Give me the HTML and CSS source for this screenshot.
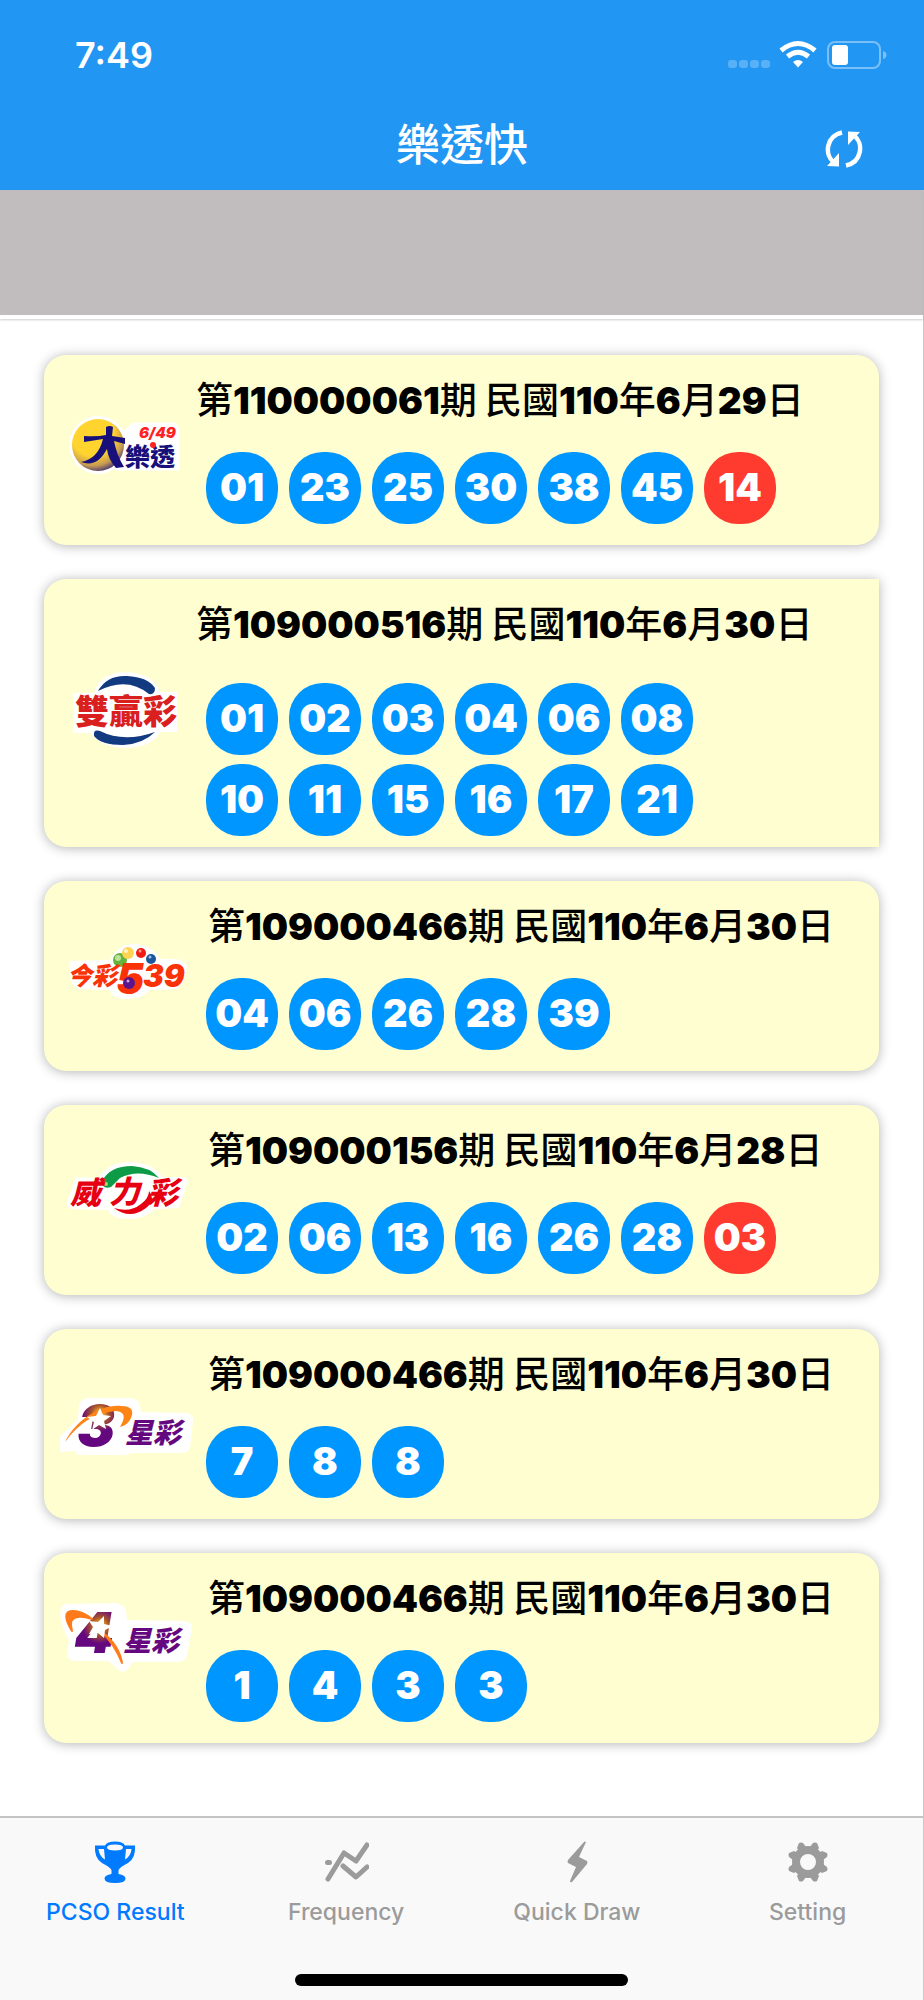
FILE: index.html
```html
<!DOCTYPE html>
<html lang="zh-Hant">
<head>
<meta charset="utf-8">
<meta name="viewport" content="width=device-width, initial-scale=1">
<title>樂透快</title>
<link rel="stylesheet" href="styles.css">
</head>
<body>
<div class="app">
  <header class="header">
    <div class="status">
      <span class="time">7:49</span>
      <svg class="status-icons" width="160" height="30" viewBox="0 0 160 30" aria-hidden="true">
        <g fill="#fff" fill-opacity=".25"><rect x="0" y="20" width="9" height="8" rx="3"/><rect x="11" y="20" width="9" height="8" rx="3"/><rect x="22" y="20" width="9" height="8" rx="3"/><rect x="33" y="20" width="9" height="8" rx="3"/></g>
        <g fill="none" stroke="#fff" stroke-width="5"><path d="M53 10.500Q70-3.500 87 10.500"/><path d="M59.500 16.500Q70 8 80.500 16.500"/></g>
        <path d="M65 22q5-4 10 0l-5 5.500z" fill="#fff"/>
        <rect x="100" y="2" width="52" height="26" rx="7" fill="none" stroke="#fff" stroke-opacity=".4" stroke-width="2"/>
        <rect x="104" y="5" width="16" height="20" rx="3" fill="#fff"/>
        <path d="M155 11q3.500 1 3.500 4t-3.500 4z" fill="#fff" fill-opacity=".4"/>
      </svg>
    </div>
    <div class="nav">
      <h1 class="title">樂透快</h1>
      <button class="refresh" type="button" aria-label="Refresh">
        <svg width="38" height="38" viewBox="0 0 38 38" aria-hidden="true"><path d="M17 2.500C1 6 -1 25 9 32.500M21 35.500C37 32 39 13 29 5.500" fill="none" stroke="#fff" stroke-width="4.500"/><path d="M14 23v13.500L2 36zM23 15V1.500l12 .5z" fill="#fff"/></svg>
      </button>
    </div>
  </header>
  <div class="banner"></div>

  <main class="results">
    <article class="card">
      <svg class="logo" viewBox="0 0 140 120" role="img" aria-label="大樂透">
        <defs><radialGradient id="sun" cx=".4" cy=".3" r=".75"><stop offset=".55" stop-color="#ffd42e"/><stop offset=".8" stop-color="#c69a52"/><stop offset="1" stop-color="#352577"/></radialGradient></defs>
        <circle cx="42" cy="55" r="29" fill="#fff"/><path d="M65 45l13-11h40q5 3 4 12v33H60z" fill="#fff" stroke="#fff" stroke-width="3" stroke-linejoin="round"/>
        <circle cx="42" cy="55" r="26" fill="url(#sun)"/>
        <path d="M28 46q13 1 22-1v-8q4-2 7 0l-1 9 13 2v6l-11-3q3 15 10 26l-8 1q-8-9-9-19-10 19-26 13 17-3 22-23l-19 3z" fill="#17107a"/>
        <text class="word navy" x="69" y="76" font-size="25">樂透</text>
        <text class="num red" x="83" y="48" font-size="15">6/49</text><circle cx="97" cy="55" r="3" fill="#f22"/>
      </svg>
      <div class="draw">
        <h2 class="issue">第<b>110000061</b>期 民國<b>110</b>年<b>6</b>月<b>29</b>日</h2>
        <ul class="balls"><li>01</li><li>23</li><li>25</li><li>30</li><li>38</li><li>45</li><li class="special">14</li></ul>
      </div>
    </article>

    <article class="card double">
      <svg class="logo" viewBox="0 0 140 120" role="img" aria-label="雙贏彩">
        <path d="M17 40h21q5-20 31-21 28 1 35 20h17v40h-17q-8 15-33 16-28-1-36-15H17z" fill="#fff"/>
        <path d="M42 38q9-16 29-15 21 1 28 12 0 7-6 6-22-18-51-3zM99 79q-12 12-32 13-22 0-29-9-1-7 6-5 24 12 55 1z" fill="#123a80"/>
        <text class="word crimson" x="19" y="71" font-size="34">雙贏彩</text>
      </svg>
      <div class="draw">
        <h2 class="issue">第<b>109000516</b>期 民國<b>110</b>年<b>6</b>月<b>30</b>日</h2>
        <ul class="balls"><li>01</li><li>02</li><li>03</li><li>04</li><li>06</li><li>08</li><li>10</li><li>11</li><li>15</li><li>16</li><li>17</li><li>21</li></ul>
      </div>
    </article>

    <article class="card inset">
      <svg class="logo" viewBox="0 0 140 120" role="img" aria-label="今彩539">
        <path d="M14 45l40-1q8-17 26-16 17 2 24 15 25-2 27 7-1 16-10 23l-27 1q-8 10-26 9-13-1-14-9l-32-1q-11-6-8-28z" fill="#fff"/>
        <circle cx="64" cy="44" r="7" fill="#64b43c"/><circle cx="62" cy="42" r="3" fill="#bfe29a"/>
        <circle cx="72" cy="37" r="6" fill="#ffd454"/><circle cx="70" cy="35" r="2" fill="#fff6c8"/>
        <circle cx="85" cy="37" r="5" fill="#f01c14"/><circle cx="84" cy="35" r="1.500" fill="#ff9c90"/>
        <circle cx="95" cy="43" r="5" fill="#1b559c"/><circle cx="94" cy="41" r="1.500" fill="#9cc0e4"/>
        <text class="word slant scarlet" x="11" y="69" font-size="25">今彩</text>
        <text class="num scarlet" x="60" y="78" font-size="42">5</text>
        <text class="num scarlet" x="87" y="71" font-size="31">39</text>
        <circle cx="73" cy="67" r="6" fill="#5b1489"/><circle cx="72" cy="65" r="1.500" fill="#c9a2e4"/>
      </svg>
      <div class="draw">
        <h2 class="issue">第<b>109000466</b>期 民國<b>110</b>年<b>6</b>月<b>30</b>日</h2>
        <ul class="balls"><li>04</li><li>06</li><li>26</li><li>28</li><li>39</li></ul>
      </div>
    </article>

    <article class="card inset">
      <svg class="logo" viewBox="0 0 140 120" role="img" aria-label="威力彩">
        <path d="M20 37l22 1q10-16 32-16 24 1 32 15h22q5 2 2 10l-7 21-24 1q-10 10-27 10-16 0-20-9l-33-1q-10 0-8-7z" fill="#fff"/>
        <path d="M46 41q8-15 30-15 18 1 27 12-22-9-39 0l-9 9q-9 3-9-6z" fill="#0d9b48"/><circle cx="50" cy="44" r="2" fill="#a8d86a"/>
        <path d="M58 68q16 5 27-4 8-6 8-13 7 9-3 17-16 12-32 0z" fill="#e60012"/>
        <text class="word slant ruby" x="14" y="64" font-size="31">威</text><text class="word slant ruby" x="53" y="63" font-size="31">力</text><text class="word slant ruby" x="91" y="64" font-size="31">彩</text>
      </svg>
      <div class="draw">
        <h2 class="issue">第<b>109000156</b>期 民國<b>110</b>年<b>6</b>月<b>28</b>日</h2>
        <ul class="balls"><li>02</li><li>06</li><li>13</li><li>16</li><li>26</li><li>28</li><li class="special">03</li></ul>
      </div>
    </article>

    <article class="card inset">
      <svg class="logo" viewBox="0 0 140 120" role="img" aria-label="3星彩">
        <defs><radialGradient id="glow3" gradientUnits="userSpaceOnUse" cx="44" cy="50" r="22"><stop offset=".1" stop-color="#ffb62e"/><stop offset=".4" stop-color="#a8542a"/><stop offset=".8" stop-color="#65087f"/></radialGradient></defs>
        <path d="M23 40q3-7 12-6h40q8 1 9 8l1 6 46 1q7 2 6 8l-3 27q-2 5-8 5H76q-8 3-15 2H28q-8 1-9-4L4 88V73l18-18z" fill="#fff"/>
        <text class="num" x="21" y="82" font-size="57" fill="url(#glow3)">3</text>
        <path d="M9 78C20 56 45 40 65 42q15 0 10 12-3 7-11 9 9-15-4-16Q30 49 9 78z" fill="#ff8416"/>
        <path d="M44 44l3 7 8 1-7 5 2 8-7-4-7 5 2-8-7-5 9-1z" fill="#fff"/>
        <text class="word slant purple" x="69" y="79" font-size="28">星彩</text>
      </svg>
      <div class="draw">
        <h2 class="issue">第<b>109000466</b>期 民國<b>110</b>年<b>6</b>月<b>30</b>日</h2>
        <ul class="balls"><li>7</li><li>8</li><li>8</li></ul>
      </div>
    </article>

    <article class="card inset">
      <svg class="logo" viewBox="0 0 140 120" role="img" aria-label="4星彩">
        <defs><radialGradient id="glow4" gradientUnits="userSpaceOnUse" cx="44" cy="38" r="22"><stop offset=".1" stop-color="#ffb62e"/><stop offset=".4" stop-color="#a8542a"/><stop offset=".8" stop-color="#65087f"/></radialGradient></defs>
        <path d="M5 20q2-5 9-4l45-1q10 1 11 8l1 9 57 1q9 1 8 8l-5 27q-3 6-9 6H77l-6 8q-5 4-9-1l-10-8H19q-8-1-8-7l2-14Q2 34 5 20z" fill="#fff"/>
        <text class="num" x="18" y="65" font-size="57" fill="url(#glow4)">4</text>
        <path d="M16 43Q4 23 17 23q9 0 19 8-15-5-20 1-2 3 0 11zM46 44q17 13 20 31-7-18-20-31z" fill="#ff7a1a" stroke="#ff7a1a" stroke-width="2" stroke-linejoin="round"/>
        <path d="M48 28v8l9 2-8 4-1 8-6-5-9 1 4-7-4-6 9 1z" fill="#fff"/>
        <text class="word slant purple" x="67" y="63" font-size="28">星彩</text>
      </svg>
      <div class="draw">
        <h2 class="issue">第<b>109000466</b>期 民國<b>110</b>年<b>6</b>月<b>30</b>日</h2>
        <ul class="balls"><li>1</li><li>4</li><li>3</li><li>3</li></ul>
      </div>
    </article>
  </main>

  <footer class="footer">
    <nav class="tabs">
      <a class="tab active" href="#result" aria-current="page">
        <svg width="44" height="44" viewBox="0 0 44 44" aria-hidden="true"><path fill="currentColor" fill-rule="evenodd" d="M12 5.500Q14 1.500 22 1.500T32 5.500H42Q43 18 35 23 27 27 25.500 30v4q7 1 7 4.500 0 4.500-10.500 4.500t-10.500-4.500q0-3.500 7-4.500v-4Q17 27 9 23 1 18 2 5.500zM22 4.500q-8 0-8 3t8 3 8-3-8-3zM5.500 9Q6 16 12 19.500L11 9zM38.500 9H33l-1 10.500Q38 16 38.500 9z"/></svg>
        <span>PCSO Result</span>
      </a>
      <a class="tab" href="#frequency">
        <svg width="46" height="44" viewBox="0 0 46 44" aria-hidden="true"><path fill="none" stroke="currentColor" stroke-width="5" stroke-linecap="round" stroke-linejoin="round" d="M5 39L21 13l12 8L44 5M20 26l13 11 11-10M4.500 22.500h2"/></svg>
        <span>Frequency</span>
      </a>
      <a class="tab" href="#draw">
        <svg width="44" height="44" viewBox="0 0 44 44" aria-hidden="true"><path fill="currentColor" d="M31 2q-1-1-2 0L13 20q-1 2 0 3l8 4-6 14q0 2 2 1l15-18q1-2 0-3l-8-4z"/></svg>
        <span>Quick Draw</span>
      </a>
      <a class="tab" href="#setting">
        <svg width="44" height="44" viewBox="0 0 44 44" aria-hidden="true"><g fill="currentColor"><path fill-rule="evenodd" d="M22 6a16 16 0 1 0 0 32 16 16 0 0 0 0-32zm0 8a8 8 0 1 1 0 16 8 8 0 0 1 0-16z"/><path id="tooth" d="M11 8l2-5q2-1 4 0l3 4h4l3-4q2-1 4 0l2 5-3 5H14z"/><use href="#tooth" transform="rotate(90 22 22)"/><use href="#tooth" transform="rotate(180 22 22)"/><use href="#tooth" transform="rotate(270 22 22)"/></g></svg>
        <span>Setting</span>
      </a>
    </nav>
    <div class="home-bar"></div>
  </footer>
</div>
</body>
</html>
```

FILE: styles.css
```css
* { box-sizing: border-box; }

body {
  margin: 0;
  background: #fff;
  color: #000;
  font-family: Inter, "Noto Sans CJK TC", sans-serif;
}

.app {
  display: flex;
  flex-direction: column;
  min-height: 100vh;
  border-right: 1px solid #c8c8c8;
}

.header {
  margin-right: -1px;
  background: #2196f3;
  color: #fff;
}

.status {
  display: flex;
  justify-content: space-between;
  align-items: center;
  height: 110px;
  padding: 0 36px 0 75px;
}

.time {
  font-size: 36px;
  font-weight: 600;
}

.nav {
  display: grid;
  grid-template-columns: 1fr auto 1fr;
  align-items: center;
  height: 80px;
  padding: 0 61px 16px;
}

.title {
  grid-column: 2;
  margin: 0;
  font-family: "Noto Sans CJK TC", sans-serif;
  font-size: 44px;
  font-weight: 500;
  line-height: 60px;
}

.refresh {
  display: flex;
  justify-self: end;
  padding: 14px 0 0;
  border: 0;
  background: none;
}

.banner {
  height: 129px;
  border-bottom: 4px solid #fff;
  background: #c1bcbd;
  box-shadow: 0 1px 2px rgba(0, 0, 0, .2);
}

.results {
  display: flex;
  flex: 1;
  flex-direction: column;
  gap: 34px;
  padding: 36px 44px 34px;
}

.card {
  display: flex;
  align-items: center;
  min-height: 190px;
  padding-left: 12px;
  border-radius: 22px;
  background: #fffed1;
  box-shadow: 0 1px 12px rgba(0, 0, 0, .3);
}

.double { border-radius: 22px 0 0 22px; }

.logo {
  flex: none;
  width: 140px;
  height: 120px;
}

.word {
  font-family: "Noto Sans CJK TC", sans-serif;
  font-weight: 900;
}

.num {
  font-family: Inter, sans-serif;
  font-style: italic;
  font-weight: 900;
}

.slant { font-style: italic; }
.navy { fill: #17107a; }
.red { fill: #f22; }
.crimson { fill: #d9201f; }
.scarlet { fill: #fa3208; }
.ruby { fill: #e60012; }
.purple { fill: #65087f; }

.draw {
  flex: 1;
  align-self: stretch;
  padding: 17px 0 11px;
}

.issue {
  height: 52px;
  margin: 0;
  font-family: "Noto Sans CJK TC", sans-serif;
  font-size: 37px;
  font-weight: 500;
  line-height: 52px;
  white-space: nowrap;
}

.issue b {
  font-family: Inter, sans-serif;
  font-weight: 900;
  line-height: 1;
}

.inset .issue { padding-left: 12px; }

.balls {
  display: flex;
  flex-wrap: wrap;
  gap: 9px 11px;
  margin: 28px 0 0;
  padding: 0 0 0 10px;
  list-style: none;
}

.balls li {
  width: 72px;
  height: 72px;
  border-radius: 34px;
  background: #0096ff;
  color: #fff;
  font-size: 38px;
  font-weight: 900;
  line-height: 70px;
  text-align: center;
}

.balls .special { background: #ff3b30; }

.double .balls {
  max-width: 520px;
  margin-top: 35px;
}

.footer {
  display: flex;
  flex-direction: column;
  align-items: center;
  gap: 42px;
  padding: 22px 0 14px;
  border-top: 2px solid #c4c4c4;
  background: #f9f9f9;
}

.tabs {
  display: grid;
  grid-template-columns: repeat(4, 1fr);
  width: 100%;
}

.tab {
  display: flex;
  flex-direction: column;
  align-items: center;
  gap: 8px;
  color: #9b9b9b;
  font-size: 23px;
  font-weight: 500;
  line-height: 40px;
  text-decoration: none;
}

.active { color: #007aff; }

.home-bar {
  width: 36%;
  height: 12px;
  border-radius: 6px;
  background: #000;
}
```
